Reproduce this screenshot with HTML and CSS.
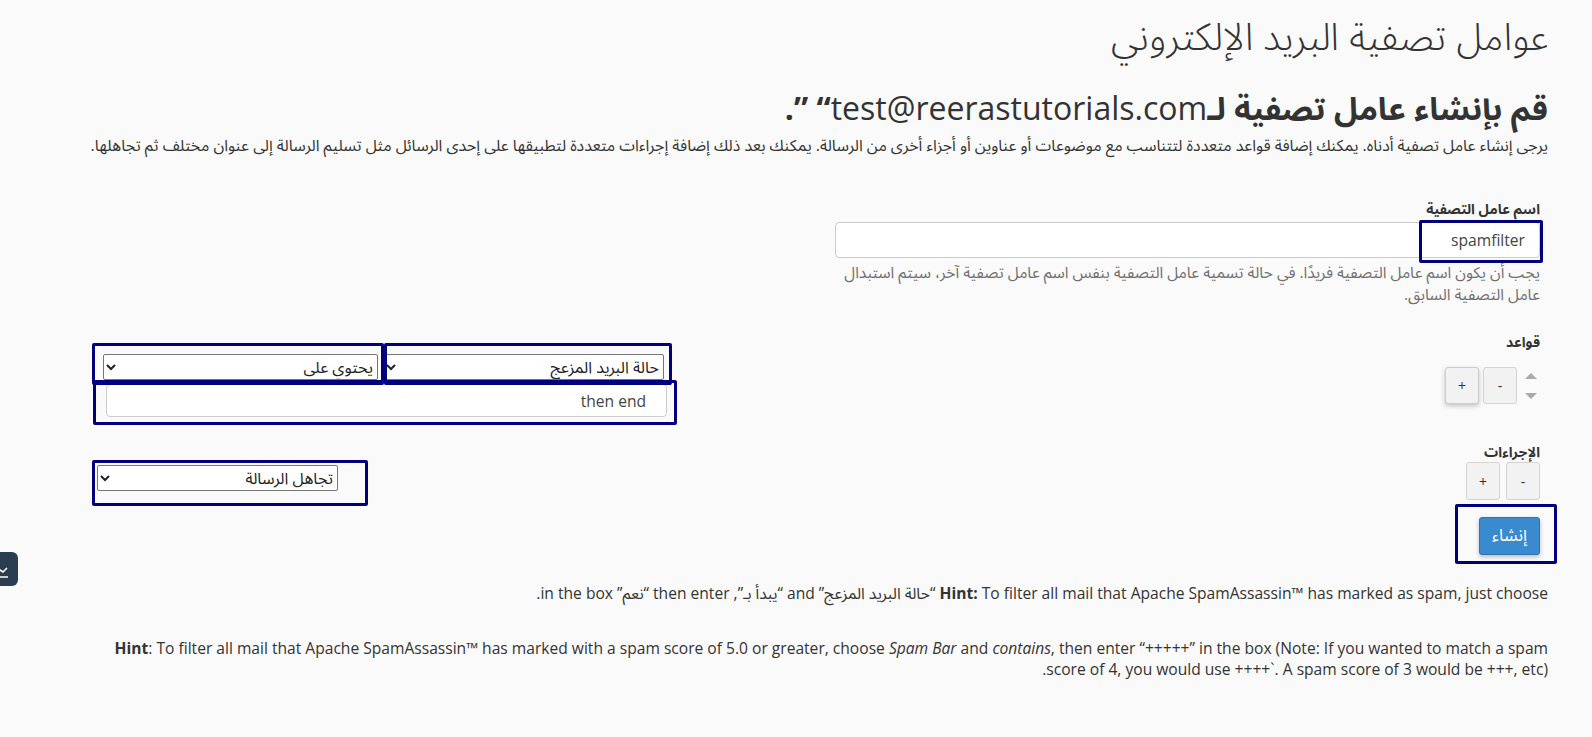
FILE: index.html
```html
<!DOCTYPE html>
<html lang="ar" dir="rtl">
<head>
    <meta charset="UTF-8">
    <meta name="viewport" content="width=device-width, initial-scale=1.0">
    <title>عوامل تصفية البريد الإلكتروني</title>
    <link rel="stylesheet" href="styles.css">
</head>
<body>
    <div class="page">
        <h1 class="page-title">عوامل تصفية البريد الإلكتروني</h1>
        <h2 class="create-title">قم بإنشاء عامل تصفية لـ<span class="addr">test@reerastutorials.com</span>“ ”.</h2>
        <p class="intro">يرجى إنشاء عامل تصفية أدناه. يمكنك إضافة قواعد متعددة لتتناسب مع موضوعات أو عناوين أو أجزاء أخرى من الرسالة. يمكنك بعد ذلك إضافة إجراءات متعددة لتطبيقها على إحدى الرسائل مثل تسليم الرسالة إلى عنوان مختلف ثم تجاهلها.</p>

        <form id="filter-form">
            <div class="form-group name-group">
                <label for="filtername">اسم عامل التصفية</label>
                <div class="name-wrap">
                    <input type="text" id="filtername" value="spamfilter">
                    <span class="mark mark-name"></span>
                </div>
                <p class="help">يجب أن يكون اسم عامل التصفية فريدًا. في حالة تسمية عامل التصفية بنفس اسم عامل تصفية آخر، سيتم استبدال عامل التصفية السابق.</p>
            </div>

            <div class="block rules-block">
                <div class="block-side">
                    <label>قواعد</label>
                    <div class="controls">
                        <div class="arrows">
                            <span class="arrow-up"></span>
                            <span class="arrow-down"></span>
                        </div>
                        <button type="button" class="btn-small">-</button>
                        <button type="button" class="btn-small btn-raised">+</button>
                    </div>
                </div>
                <div class="rule-fields">
                    <div class="select-row">
                        <select class="sel sel-part">
                            <option>حالة البريد المزعج</option>
                            <option>من</option>
                            <option>الموضوع</option>
                        </select>
                        <select class="sel sel-match">
                            <option>يحتوي على</option>
                            <option>يبدأ بـ</option>
                            <option>يساوي</option>
                        </select>
                    </div>
                    <input type="text" class="rule-value" value="then end">
                    <span class="mark mark-sel1"></span>
                    <span class="mark mark-sel2"></span>
                    <span class="mark mark-val"></span>
                </div>
            </div>

            <div class="block actions-block">
                <div class="block-side">
                    <label>الإجراءات</label>
                    <div class="controls">
                        <button type="button" class="btn-small">-</button>
                        <button type="button" class="btn-small">+</button>
                    </div>
                </div>
                <div class="action-fields">
                    <select class="sel sel-action">
                        <option>تجاهل الرسالة</option>
                        <option>تسليم إلى عنوان</option>
                    </select>
                    <span class="mark mark-action"></span>
                </div>
            </div>

            <div class="submit-row">
                <div class="submit-wrap">
                    <button type="button" class="btn-primary">إنشاء</button>
                    <span class="mark mark-submit"></span>
                </div>
            </div>
        </form>

        <p class="hint hint-one"><b>Hint:</b> To filter all mail that Apache SpamAssassin™ has marked as spam, just choose “حالة البريد المزعج” and “يبدأ بـ”, then enter “نعم” in the box.</p>
        <p class="hint hint-two"><b>Hint</b>: To filter all mail that Apache SpamAssassin™ has marked with a spam score of 5.0 or greater, choose <i>Spam Bar</i> and <i>contains</i>, then enter “+++++” in the box (Note: If you wanted to match a spam score of 4, you would use ++++`. A spam score of 3 would be +++, etc).</p>
    </div>

    <div class="side-tab">
        <svg width="18" height="34" viewBox="0 0 18 34">
            <polyline points="-4,21 0,18 3,20 7,16" fill="none" stroke="#fff" stroke-width="1.6"/>
            <line x1="-2" y1="25" x2="8" y2="25" stroke="#fff" stroke-width="1.4"/>
        </svg>
    </div>
</body>
</html>
```

FILE: styles.css
```css
body {
    margin: 0;
    background: #fafafa;
    color: #333;
    font-family: "Open Sans", "Noto Sans Arabic", "DejaVu Sans", sans-serif;
    font-size: 15.6px;
}
.page {
    padding: 0 44px 40px 84px;
}
.page-title {
    margin: 12px 0 0;
    font-size: 38px;
    font-weight: 300;
    line-height: 46px;
}
.create-title {
    margin: 29px 0 0;
    font-size: 32px;
    font-weight: 700;
    line-height: 42px;
}
.create-title .addr {
    font-weight: 400;
}
.intro {
    margin: 6px 0 0;
    font-size: 15.9px;
    line-height: 20px;
}

/* form */
#filter-form {
    margin-right: 8px;
}
.form-group label,
.block-side label {
    display: block;
    font-size: 14px;
    font-weight: 700;
    line-height: 20px;
}
.name-group {
    margin-top: 44px;
    width: 705px;
}
.name-group label {
    margin-bottom: 3px;
}
.name-wrap {
    position: relative;
}
.name-wrap input {
    box-sizing: border-box;
    width: 100%;
    height: 36px;
    padding: 6px 14px;
    border: 1px solid #ccc;
    border-radius: 4px;
    background: #fff;
    color: #444;
    font: inherit;
    font-size: 15.6px;
}
.help {
    margin: 3px 0 0;
    color: #707070;
    line-height: 22px;
}
.block {
    display: flex;
    justify-content: space-between;
    align-items: flex-start;
}
.rules-block {
    margin-top: 27px;
}
.actions-block {
    margin-top: 25px;
}
.controls {
    display: flex;
    align-items: center;
    gap: 4px;
    margin-top: 15px;
}
.actions-block .controls {
    margin-top: 0;
    gap: 6px;
}
.arrows {
    display: flex;
    flex-direction: column;
    gap: 14px;
    width: 12px;
    margin: 0 3px 0 4px;
}
.arrow-up,
.arrow-down {
    width: 0;
    height: 0;
    border-left: 6px solid transparent;
    border-right: 6px solid transparent;
}
.arrow-up {
    border-bottom: 6px solid #aaa;
}
.arrow-down {
    border-top: 6px solid #aaa;
}
.btn-small {
    width: 34px;
    height: 37px;
    padding: 0;
    border: 1px solid #d4d4d4;
    border-radius: 3px;
    background: #f2f2f2;
    color: #333;
    font-family: inherit;
    font-size: 14px;
    cursor: pointer;
}
.actions-block .btn-small {
    height: 38px;
}
.btn-raised {
    border-color: #ccc;
    box-shadow: 0 2px 5px rgba(0, 0, 0, 0.22);
}
.rule-fields {
    position: relative;
    width: 564px;
    margin: 22px 0 0 19px;
}
.select-row {
    display: flex;
    gap: 5px;
    padding-right: 3px;
}
.sel {
    box-sizing: border-box;
    height: 26px;
    border: 1px solid #767676;
    border-radius: 2px;
    background: #fff;
    color: #222;
    font-family: inherit;
    font-size: 16px;
}
.sel-part {
    width: 281px;
}
.sel-match {
    width: 275px;
}
.rule-value {
    box-sizing: border-box;
    display: block;
    width: 561px;
    height: 33px;
    margin-top: 4px;
    padding: 4px 20px;
    border: 1px solid #ccc;
    border-radius: 4px;
    background: #fff;
    color: #444;
    font: inherit;
    font-size: 15.6px;
}
.action-fields {
    position: relative;
    margin: 23px 0 0 13px;
}
.sel-action {
    width: 241px;
}
.submit-row {
    display: flex;
    margin-top: 17px;
}
.submit-wrap {
    position: relative;
}
.btn-primary {
    height: 38px;
    padding: 0 12px;
    border: 1px solid #2f74b3;
    border-radius: 3px;
    background: #3a8ad0;
    color: #fff;
    font-family: inherit;
    font-size: 17px;
    box-shadow: 0 2px 4px rgba(0, 0, 0, 0.25);
    cursor: pointer;
}

/* hints */
.hint {
    margin: 0;
    line-height: 21px;
}
.hint-one {
    margin-top: 28px;
}
.hint-two {
    margin-top: 34px;
}

/* navy highlight frames drawn over the screenshot */
.mark {
    position: absolute;
    border: 3px solid #00007f;
    border-radius: 2px;
    pointer-events: none;
}
.mark-name {
    top: -2px;
    right: -3px;
    width: 118px;
    height: 37px;
}
.mark-sel1 {
    top: -11px;
    right: -5px;
    width: 282px;
    height: 36px;
}
.mark-sel2 {
    top: -11px;
    left: -11px;
    width: 286px;
    height: 36px;
}
.mark-val {
    top: 26px;
    left: -10px;
    width: 578px;
    height: 39px;
}
.mark-action {
    top: -5px;
    left: -5px;
    width: 270px;
    height: 40px;
}
.mark-submit {
    top: -13px;
    right: -17px;
    width: 96px;
    height: 54px;
}

.side-tab {
    position: fixed;
    left: 0;
    top: 552px;
    width: 18px;
    height: 34px;
    overflow: hidden;
    border-radius: 0 6px 6px 0;
    background: #2b3d4f;
}
```
